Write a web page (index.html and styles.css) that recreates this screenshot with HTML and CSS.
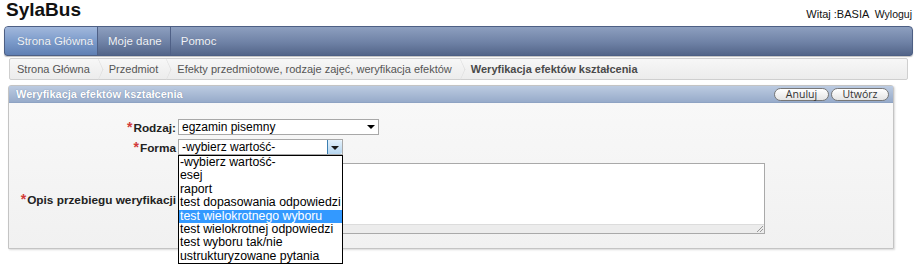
FILE: index.html
```html
<!DOCTYPE html>
<html lang="pl">
<head>
    <meta charset="UTF-8">
    <title>SylaBus</title>
    <link rel="stylesheet" href="styles.css">
</head>
<body>
    <!-- nagłówek -->
    <div class="top">
        <div class="logo">SylaBus</div>
        <div class="user">Witaj :BASIA <a href="#" class="logout">Wyloguj</a></div>
    </div>

    <!-- menu -->
    <div class="tabs">
        <a href="#" class="tab active">Strona Główna</a>
        <a href="#" class="tab">Moje dane</a>
        <a href="#" class="tab">Pomoc</a>
    </div>

    <!-- okruszki -->
    <div class="crumbs">
        <span class="crumb">Strona Główna</span>
        <span class="crumb">Przedmiot</span>
        <span class="crumb">Efekty przedmiotowe, rodzaje zajęć, weryfikacja efektów</span>
        <span class="crumb current">Weryfikacja efektów kształcenia</span>
    </div>

    <!-- formularz -->
    <div class="panel">
        <div class="panel-head">
            <span class="panel-title">Weryfikacja efektów kształcenia</span>
            <div class="buttons">
                <button class="btn">Anuluj</button>
                <button class="btn">Utwórz</button>
            </div>
        </div>
        <div class="panel-body">
            <div class="row">
                <label class="label"><span class="req">*</span>Rodzaj:</label>
                <div class="select wide">egzamin pisemny<span class="arrow"></span></div>
            </div>
            <div class="row">
                <label class="label"><span class="req">*</span>Forma</label>
                <div class="select open">-wybierz wartość-<span class="arrow hot"></span>
                    <ul class="options">
                        <li>-wybierz wartość-</li>
                        <li>esej</li>
                        <li>raport</li>
                        <li>test dopasowania odpowiedzi</li>
                        <li class="hover">test wielokrotnego wyboru</li>
                        <li>test wielokrotnej odpowiedzi</li>
                        <li>test wyboru tak/nie</li>
                        <li>ustrukturyzowane pytania</li>
                    </ul>
                </div>
            </div>
            <div class="row area-row">
                <label class="label"><span class="req">*</span>Opis przebiegu weryfikacji</label>
                <div class="area">
                    <div class="area-text"></div>
                    <div class="area-foot"><span class="grip"></span></div>
                </div>
            </div>
        </div>
    </div>
</body>
</html>
```

FILE: styles.css
```css
* {
    box-sizing: border-box;
}
html, body {
    min-height: 100%;
}
body {
    margin: 0;
    padding: 0 6px 30px 4px;
    min-height: 273px;
    font-family: 'Liberation Sans', Arial, sans-serif;
    font-size: 12px;
    color: #222;
    background: #fff;
}
.top {
    display: flex;
    justify-content: space-between;
    align-items: flex-end;
    height: 26px;
    padding: 0 0 6px 2px;
}
.logo {
    font-size: 19px;
    font-weight: bold;
    color: #111;
    line-height: 22px;
    align-self: flex-start;
    margin-top: -1px;
}
.user {
    font-size: 11px;
    color: #111;
    padding-right: 1px;
}
.logout {
    color: #111;
    text-decoration: none;
    margin-left: 3px;
    font-size: 10.5px;
}

/* menu */
.tabs {
    display: flex;
    height: 30px;
    background: linear-gradient(#8d9fbf, #6f82a6 55%, #536589);
    border-radius: 4px 4px 3px 3px;
    border: 1px solid #4d5f84;
    box-shadow: 0 1px 1px rgba(0,0,0,0.25);
}
.tab {
    display: flex;
    align-items: center;
    padding: 0 8px 0 10px;
    color: #f0f3f9;
    text-decoration: none;
    font-size: 11.5px;
    white-space: nowrap;
    border-right: 1px solid #4f6086;
    text-shadow: 0 0 1px rgba(0,0,0,0.2);
}
.tab.active {
    width: 93px;
    padding: 0 0 0 12px;
    border-radius: 3px 0 0 3px;
    background: linear-gradient(#a2b8dc, #7d9ccb 50%, #5f7fb3);
}
.tab:last-child {
    border-right: none;
}

/* okruszki */
.crumbs {
    display: flex;
    align-items: center;
    height: 22px;
    margin: 2px 5px 0 5px;
    padding-left: 7px;
    background: linear-gradient(#f7f7f7, #ececec);
    border: 1px solid #cfcfcf;
    border-radius: 2px;
    font-size: 11px;
    color: #555;
    white-space: nowrap;
}
.crumb {
    display: flex;
    align-items: center;
}
.crumb::after {
    content: '';
    width: 14px;
    height: 14px;
    margin: 0 3px 0 1px;
    border-top: 1px solid #dcdcdc;
    border-right: 1px solid #dcdcdc;
    transform: scaleX(0.45) rotate(45deg);
}
.crumb.current {
    font-weight: bold;
    color: #4a4a4a;
}
.crumb.current::after {
    display: none;
}

/* panel */
.panel {
    margin: 5px 19px 0 4px;
    border: 1px solid #c4c4c4;
    border-radius: 3px 3px 0 0;
    box-shadow: 1px 1px 2px rgba(0,0,0,0.15);
}
.panel-head {
    display: flex;
    justify-content: space-between;
    align-items: center;
    height: 17px;
    padding: 0 4px 0 7px;
    background: linear-gradient(#bccbe1, #97abca);
    border-bottom: 1px solid #8ea3c3;
}
.panel-title {
    color: #fff;
    font-weight: bold;
    font-size: 11px;
    text-shadow: 0 0 1px rgba(60,80,120,0.6);
}
.buttons {
    display: flex;
    gap: 2px;
}
.btn {
    height: 13px;
    padding: 0;
    font-family: 'Open Sans', sans-serif;
    font-size: 10.5px;
    line-height: 11px;
    color: #333;
    background: linear-gradient(#ffffff, #e4e4e4);
    border: 1px solid #777;
    border-radius: 7px;
}
.btn:first-child {
    width: 55px;
}
.btn:last-child {
    width: 58px;
}
.panel-body {
    padding: 16px 0 10px 0;
    background: linear-gradient(#f8f8f8, #f1f1f1);
    height: 145px;
}
.row {
    display: flex;
    align-items: center;
    gap: 2px;
    margin-bottom: 4px;
}
.label {
    width: 167px;
    text-align: right;
    font-weight: bold;
    font-size: 11.8px;
    color: #222;
    white-space: nowrap;
}
.req {
    color: #d23a3a;
    font-size: 14px;
    font-weight: bold;
    margin-right: 1px;
}

/* pola wyboru */
.select {
    position: relative;
    width: 165px;
    height: 16px;
    padding-left: 3px;
    line-height: 14px;
    font-size: 12px;
    color: #000;
    background: #fff;
    border: 1px solid #a8a8a8;
}
.select.wide {
    width: 201px;
}
.select.open {
    z-index: 5;
}
.arrow {
    position: absolute;
    right: 0;
    top: 0;
    width: 15px;
    height: 14px;
}
.arrow::after {
    content: '';
    position: absolute;
    left: 4px;
    top: 5px;
    border-left: 4px solid transparent;
    border-right: 4px solid transparent;
    border-top: 4px solid #000;
}
.arrow.hot {
    background: linear-gradient(#e4f1fb, #b6d6f0);
    border-left: 1px solid #3c7fb1;
    border-radius: 0 2px 2px 0;
}
.arrow.hot::after {
    left: 3px;
    top: 6px;
    border-top-color: #1a1a1a;
}
.options {
    position: absolute;
    left: -1px;
    top: 15px;
    width: 165px;
    margin: 0;
    padding: 0;
    list-style: none;
    background: #fff;
    border: 1px solid #000;
}
.options li {
    height: 13.4px;
    line-height: 13px;
    padding-left: 1px;
    font-size: 12.3px;
    color: #000;
    white-space: nowrap;
}
.options li.hover {
    background: #3399ff;
    color: #fff;
}

/* pole tekstowe */
.area-row {
    margin-top: 8px;
}
.area {
    width: 587px;
    height: 71px;
    display: flex;
    flex-direction: column;
    border: 1px solid #a9a9a9;
    background: #fff;
}
.area-text {
    flex: 1;
}
.area-foot {
    position: relative;
    height: 9px;
    background: #ececec;
    border-top: 1px solid #dcdcdc;
}
.grip {
    position: absolute;
    right: 1px;
    bottom: 1px;
    width: 6px;
    height: 6px;
    background: linear-gradient(135deg, transparent 45%, #999 45%, #999 55%, transparent 55%, transparent 70%, #999 70%, #999 80%, transparent 80%);
}
```
